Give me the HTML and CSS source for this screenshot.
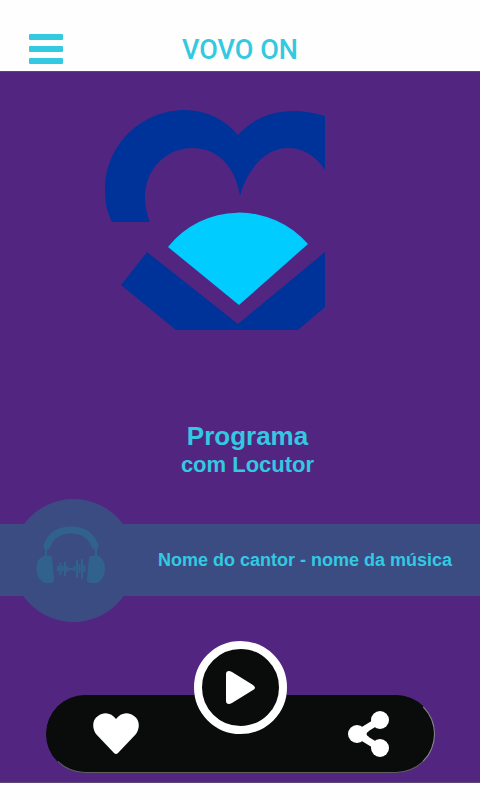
FILE: index.html
```html
<!DOCTYPE html>
<html lang="pt-BR">
<head>
  <meta charset="UTF-8" />
  <meta name="viewport" content="width=device-width, initial-scale=1.0" />
  <title>VOVO ON</title>
  <link rel="stylesheet" href="styles.css">
</head>
<body>
  <header class="topbar">
    <button class="menu-btn" type="button" aria-label="Menu">
      <span></span>
      <span></span>
      <span></span>
    </button>
    <h1>VOVO ON</h1>
  </header>

  <main>
    <svg class="logo" viewBox="0 0 270 220" aria-hidden="true">
      <path fill="#003399" d="M7 112C2 102 0 92 0 80C0 35 36 0 80 0C101 0 119 9 133 25C147 9 167 1 188 1C200 1 210 3 220 6V60C211 46 198 38 183 38C158 38 141 63 135 86C131 58 113 38 88 38C60 38 40 60 40 87C40 96 42 105 45 112Z"/>
      <path fill="#00ccff" d="M63 137A91 91 0 0 1 203 134L134 195Z"/>
      <path fill="#003399" d="M42 142L133 214L220 142V197L193 220H71L16 175Z"/>
    </svg>

    <div class="program">
      <h2>Programa</h2>
      <p>com Locutor</p>
    </div>

    <section class="now-playing">
      <div class="cover">
        <svg width="70" height="58" viewBox="0 0 70 58" aria-hidden="true">
          <g fill="none" stroke="#31628d">
            <path stroke-width="7" stroke-linecap="round" d="M11 20C15 9 24 4 35 4S55 9 59 20"/>
            <path stroke-width="2" d="M10 22V32M60 22V32"/>
            <path stroke-width="2" d="M22 40V45M24.300 37V49M26.500 40V45M29 36V50M31.500 40V46M34 42V44M36 42V44M38.500 40V45M41 34V52M43.500 38V47M46 33V53M48.300 39V46"/>
            <path d="M21 43H49"/>
          </g>
          <path fill="#31628d" d="M8 30H14Q16 30 16 32L18 54Q18 56 17 56L15 57H9Q8 57 6 55C2 52 0.500 48 0.500 43C0.500 37 2 33 6 31Z"/>
          <path fill="#31628d" d="M62 30H55Q53 30 53 32L51 54Q51 56 52 56L54 57H60Q62 57 64 55C67 52 69 48 69 43C69 37 67 33 64 31Z"/>
        </svg>
      </div>
      <p>Nome do cantor - nome da música</p>
    </section>

    <div class="player">
      <button type="button" aria-label="Favoritar">
        <svg width="46" height="42" viewBox="0 0 46 42" aria-hidden="true">
          <path fill="#fff" d="M21 40L3 21C-1 15-1 7 5 3C11-2 19 0 23 6C27 0 35-2 41 3C47 7 47 15 43 21L25 40Q23 42 21 40Z"/>
        </svg>
      </button>
      <button class="play-btn" type="button" aria-label="Tocar">
        <svg width="29" height="33" viewBox="0 0 29 33" aria-hidden="true">
          <path fill="#fff" d="M0 3Q0 0 3 0Q4 0 6 1L27 14Q31 17 27 19L6 32Q4 33 3 33Q0 33 0 30Z"/>
        </svg>
      </button>
      <button type="button" aria-label="Compartilhar">
        <svg width="41" height="46" viewBox="0 0 41 46" aria-hidden="true">
          <path fill="none" stroke="#fff" stroke-width="7" d="M32 9L9 23L32 37"/>
          <path fill="#fff" d="M14 16L21 20Q16 23 21 26L14 30Z"/>
          <circle cx="9" cy="23" r="9" fill="#fff"/>
          <circle cx="32" cy="9" r="9" fill="#fff"/>
          <circle cx="32" cy="37" r="9" fill="#fff"/>
        </svg>
      </button>
    </div>
  </main>
</body>
</html>
```
FILE: styles.css
```css
* {
  margin: 0;
  padding: 0;
  box-sizing: border-box;
}
body {
  display: flex;
  flex-direction: column;
  min-height: 100vh;
  padding-bottom: 17px;
  background-color: #fefefe;
  font-family: "Liberation Sans", Arial, sans-serif;
  color: #33c9e1;
}
button {
  border: none;
  background: none;
  cursor: pointer;
}
svg {
  display: block;
}
.topbar {
  display: grid;
  grid-template-columns: 34px 1fr 34px;
  align-items: start;
  padding: 34px 29px 5px;
}
.topbar h1 {
  font-family: Roboto, sans-serif;
  font-size: 27px;
  font-weight: 500;
  line-height: 32px;
  text-align: center;
}
.menu-btn {
  display: flex;
  flex-direction: column;
  gap: 6px;
}
.menu-btn span {
  width: 34px;
  height: 6px;
  border-radius: 1px;
  background-color: #33c9e1;
}
main {
  flex: 1;
  display: flex;
  flex-direction: column;
  padding: 38px 0 9px;
  border-top: 1px solid #5c4773;
  border-bottom: 1px solid #5c4773;
  background-color: #522680;
}
.logo {
  width: 270px;
  margin: 0 auto;
}
.program {
  margin: 92px 0 46px;
  padding-left: 15px;
  text-align: center;
}
.program h2 {
  margin-bottom: 2px;
  font-size: 26px;
  line-height: 28px;
}
.program p {
  font-size: 22px;
  font-weight: bold;
  line-height: 26px;
}
.now-playing {
  display: flex;
  align-items: center;
  justify-content: space-between;
  height: 72px;
  padding: 0 28px 0 12px;
  background-color: #3b4c83;
}
.now-playing p {
  font-size: 18px;
  font-weight: bold;
}
.cover {
  display: flex;
  justify-content: center;
  flex-shrink: 0;
  width: 123px;
  height: 123px;
  padding-top: 27px;
  padding-right: 5px;
  border-radius: 50%;
  background-color: #3b4c83;
}
.player {
  position: relative;
  display: flex;
  align-items: center;
  justify-content: space-between;
  height: 78px;
  margin: auto 45px 0 46px;
  padding: 0 45px 0 46px;
  border: 1px solid #090c0b;
  border-right-color: #8d8d8d;
  border-bottom-color: #5f5f5f;
  border-radius: 39px;
  background-color: #090c0b;
}
/* sits over the top edge of the bar */
.play-btn {
  position: absolute;
  top: -55px;
  left: 50%;
  display: flex;
  align-items: center;
  justify-content: center;
  width: 93px;
  height: 93px;
  margin-left: -47px;
  border: 8px solid #fff;
  border-radius: 50%;
  background-color: #090c0b;
}
```
